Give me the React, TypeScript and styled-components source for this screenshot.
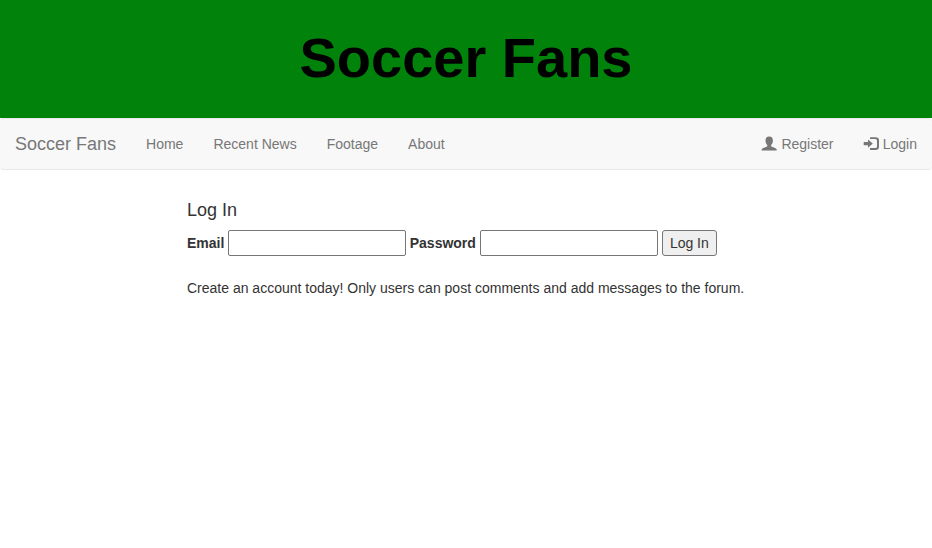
import React from "react";
import styled, { createGlobalStyle } from "styled-components";

const GlobalStyle = createGlobalStyle`
  *, *::before, *::after { box-sizing: border-box; }
  body {
    margin: 0;
    background: #fff;
    color: #333;
    font: 14px/20px "Liberation Sans", Arial, sans-serif;
  }
`;

const Banner = styled.header`
  height: 118px;
  padding-top: 27px;
  background: #00820b;
  text-align: center;
`;

const BannerTitle = styled.h1`
  margin: 0;
  color: #000;
  font-size: 56px;
  font-weight: 700;
  line-height: 62px;
`;

const Navbar = styled.nav`
  display: flex;
  align-items: center;
  height: 52px;
  border: solid #e7e7e7;
  border-width: 1px 0;
  border-radius: 4px;
  background: #f8f8f8;
`;

const Brand = styled.a`
  padding: 15px;
  color: #777;
  font-size: 18px;
`;

const NavList = styled.ul<{ $end?: boolean }>`
  display: flex;
  margin: 0 0 0 ${(p) => (p.$end ? "auto" : "0")};
  padding: 0;
  list-style: none;
`;

const NavLink = styled.a`
  display: block;
  padding: 15px;
  color: #777;
`;

const Glyph = styled.svg`
  display: inline-block;
  width: 15px;
  height: 14px;
  margin-right: 0.3px;
  vertical-align: -2px;
  fill: #777;
  overflow: visible;
`;

const Content = styled.main`
  width: 60%;
  margin: 30px auto 0;
  padding-left: 0.6px;
`;

const Heading = styled.h4`
  margin: 0 0 10px;
  font-size: 18px;
  font-weight: 400;
  line-height: 20px;
`;

const LoginForm = styled.form`
  display: flex;
  align-items: center;
  gap: 3.7px;
  height: 26px;
`;

const Label = styled.label`
  font-weight: 700;
`;

const Field = styled.input`
  width: 178px;
  height: 26px;
  margin: 0;
  padding: 1px 2px;
  border: 1px solid #767676;
  border-radius: 2px;
  background: #fff;
  font: inherit;
`;

const Submit = styled.button`
  width: 55px;
  height: 26px;
  margin: 0 0 0 0.6px;
  padding: 1px 7px;
  border: 1px solid #767676;
  border-radius: 3px;
  background: #efefef;
  color: #333;
  font: inherit;
  white-space: nowrap;
`;

const Note = styled.p`
  margin: 22px 0 0;
`;

const UserIcon = () => (
  <Glyph viewBox="0 0 15 14" aria-hidden="true">
    <path d="M7.2 -.4C4.7 -.4 3.5 1.1 3.5 3.4C3.5 5.6 4.3 6.9 5.3 8V9.1C5.1 9.8 3.5 10.2 2 10.8C.3 11.5 -.4 12 -.4 13.6H14.8C14.8 12 14.1 11.5 12.4 10.8C10.9 10.2 9.3 9.8 9.1 9.1V8C10.1 6.9 10.9 5.6 10.9 3.4C10.9 1.1 9.7 -.4 7.2 -.4Z" />
  </Glyph>
);

const LoginIcon = () => (
  <Glyph viewBox="0 0 15 14" aria-hidden="true">
    <path d="M6 .2H11.5Q15 .2 15 3.4V9.8Q15 13 11.5 13H6V11.1H11.3Q13 11.1 13 9.5V3.7Q13 2.1 11.3 2.1H6Z" />
    <path d="M4 2.4L8.8 6.6L4 10.8V8.3H-.3V4.9H4Z" />
  </Glyph>
);

const links = ["Home", "Recent News", "Footage", "About"];

export default function App() {
  return (
    <>
      <GlobalStyle />
      <Banner>
        <BannerTitle>Soccer Fans</BannerTitle>
      </Banner>
      <Navbar>
        <Brand>Soccer Fans</Brand>
        <NavList>
          {links.map((label) => (
            <li key={label}>
              <NavLink>{label}</NavLink>
            </li>
          ))}
        </NavList>
        <NavList $end>
          <li>
            <NavLink><UserIcon /> Register</NavLink>
          </li>
          <li>
            <NavLink><LoginIcon /> Login</NavLink>
          </li>
        </NavList>
      </Navbar>
      <Content>
        <Heading>Log In</Heading>
        <LoginForm onSubmit={(e: React.FormEvent) => e.preventDefault()}>
          <Label htmlFor="email">Email</Label>
          <Field id="email" type="text" />
          <Label htmlFor="password">Password</Label>
          <Field id="password" type="password" />
          <Submit type="submit">Log In</Submit>
        </LoginForm>
        <Note>Create an account today! Only users can post comments and add messages to the forum.</Note>
      </Content>
    </>
  );
}
